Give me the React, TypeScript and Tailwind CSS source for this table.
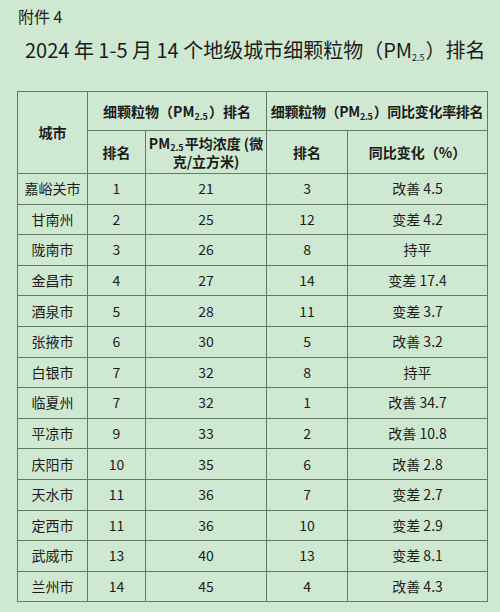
const rows: [string, string, string, string, string][] = [
  ["嘉峪关市", "1", "21", "3", "改善 4.5"],
  ["甘南州", "2", "25", "12", "变差 4.2"],
  ["陇南市", "3", "26", "8", "持平"],
  ["金昌市", "4", "27", "14", "变差 17.4"],
  ["酒泉市", "5", "28", "11", "变差 3.7"],
  ["张掖市", "6", "30", "5", "改善 3.2"],
  ["白银市", "7", "32", "8", "持平"],
  ["临夏州", "7", "32", "1", "改善 34.7"],
  ["平凉市", "9", "33", "2", "改善 10.8"],
  ["庆阳市", "10", "35", "6", "改善 2.8"],
  ["天水市", "11", "36", "7", "变差 2.7"],
  ["定西市", "11", "36", "10", "变差 2.9"],
  ["武威市", "13", "40", "13", "变差 8.1"],
  ["兰州市", "14", "45", "4", "改善 4.3"],
];

const cell = "border border-[#5f7d62] text-center align-middle p-0";

function Sub() {
  return <span className="text-[9px] leading-none align-[-3px] mr-[1px]">2.5</span>;
}

export default function App() {
  return (
    <div
      className="w-[500px] h-[612px] bg-[#cfe8d1] text-[#1c1c1c] overflow-hidden"
      style={{ fontFamily: '"Noto Sans CJK SC", "Noto Sans", sans-serif' }}
    >
      <div className="pl-[18px] pt-[5px] text-[16px] leading-[22px]">附件 4</div>
      <div className="pl-[25px] pt-[9px] h-[36px] text-[20px] leading-[27px] whitespace-nowrap">
        2024 年 1-5 月 14 个地级城市细颗粒物（PM<Sub />）排名
      </div>
      <table className="ml-[17px] mt-[28px] border-collapse w-[470px] table-fixed text-[14px]">
        <colgroup>
          <col className="w-[70px]" />
          <col className="w-[58px]" />
          <col className="w-[121px]" />
          <col className="w-[81px]" />
          <col className="w-[140px]" />
        </colgroup>
        <thead className="font-bold">
          <tr className="h-[39px]">
            <th rowSpan={2} className={cell}>城市</th>
            <th colSpan={2} className={cell}>细颗粒物（PM<Sub />）排名</th>
            <th colSpan={2} className={`${cell} tracking-[-0.3px]`}>细颗粒物（PM<Sub />）同比变化率排名</th>
          </tr>
          <tr className="h-[43px]">
            <th className={cell}>排名</th>
            <th className={`${cell} whitespace-nowrap`}>
              <div className="leading-[19px]">
                PM<span className="text-[9px] leading-none align-[-2px] mr-[1px]">2.5</span>平均浓度 (微
              </div>
              <div className="leading-[17px]">克/立方米)</div>
            </th>
            <th className={cell}>排名</th>
            <th className={cell}>同比变化（%）</th>
          </tr>
        </thead>
        <tbody>
          {rows.map((r, i) => (
            <tr key={i} className="h-[30.6px]">
              {r.map((v, j) => (
                <td key={j} className={cell}>{v}</td>
              ))}
            </tr>
          ))}
        </tbody>
      </table>
    </div>
  );
}
